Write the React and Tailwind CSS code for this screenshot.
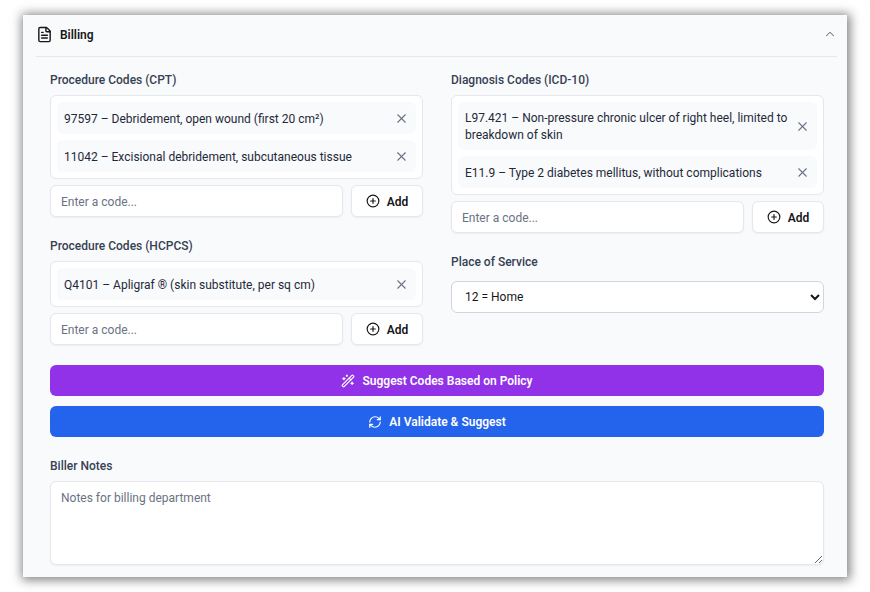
import { useId } from "react";
import { ChevronUp, CirclePlus, FileText, RefreshCw, WandSparkles, X } from "lucide-react";

const labelClass = "block pt-px text-[12px] leading-[17px] font-medium text-gray-700";

function CodeField({ label, codes }) {
  const id = useId();
  return (
    <section>
      <label htmlFor={id} className={labelClass}>{label}</label>
      <ul className="mt-1.5 flex flex-col gap-1.5 rounded-md border border-gray-200 bg-white p-1.5">
        {codes.map((code) => (
          <li key={code} className="flex min-h-8 items-center justify-between gap-1 rounded-md bg-[#f9fafc] px-[7px] pt-2 pb-1.5 text-[12px] leading-[17px] text-gray-800">
            <span>{code}</span>
            <button type="button" aria-label={`Remove ${code}`} className="shrink-0 pb-0.5 text-gray-500">
              <X size={15} strokeWidth={1.75} />
            </button>
          </li>
        ))}
      </ul>
      <div className="mt-1.5 flex gap-2">
        <input id={id} type="text" placeholder="Enter a code..." className="h-8 min-w-0 flex-1 rounded-md border border-gray-200 bg-white px-2.5 pt-0.5 text-[12px] shadow-xs placeholder:text-gray-500" />
        <button type="button" className="flex h-8 w-[72px] shrink-0 items-center justify-center gap-[7px] rounded-md border border-gray-200 bg-white text-[12px] font-semibold text-neutral-900 shadow-xs">
          <CirclePlus size={14} strokeWidth={2} />
          <span className="pt-0.5">Add</span>
        </button>
      </div>
    </section>
  );
}

export default function App() {
  return (
    <div className="bg-white px-[23px] py-[15px] font-[Roboto,sans-serif]">
      <main className="bg-[#f9fafc] pb-3 shadow-[1px_1px_10px_2px_rgba(0,0,0,0.5)]">
        <header className="mr-2.5 ml-[13px] flex h-[42px] items-center gap-[7px] border-b border-gray-200 pb-[3px]">
          <FileText size={17} strokeWidth={2} className="text-neutral-900" />
          <h1 className="flex-1 pt-0.5 text-[12px] font-semibold text-neutral-900">Billing</h1>
          <button type="button" aria-label="Collapse billing" className="text-gray-500">
            <ChevronUp size={14} strokeWidth={1.75} />
          </button>
        </header>
        <form className="flex flex-col gap-5 pt-3.5 pr-[23px] pl-[27px]">
          <div className="grid grid-cols-2 gap-7">
            <div className="flex flex-col gap-5">
              <CodeField
                label="Procedure Codes (CPT)"
                codes={["97597 – Debridement, open wound (first 20 cm²)", "11042 – Excisional debridement, subcutaneous tissue"]}
              />
              <CodeField label="Procedure Codes (HCPCS)" codes={["Q4101 – Apligraf ® (skin substitute, per sq cm)"]} />
            </div>
            <div className="flex flex-col gap-5">
              <CodeField
                label="Diagnosis Codes (ICD-10)"
                codes={["L97.421 – Non-pressure chronic ulcer of right heel, limited to breakdown of skin", "E11.9 – Type 2 diabetes mellitus, without complications"]}
              />
              <div>
                <label htmlFor="place" className={labelClass}>Place of Service</label>
                <select id="place" defaultValue="12" className="mt-2.5 h-8 w-full rounded-md border border-gray-300 bg-white px-[9px] text-[12px] text-neutral-900">
                  <option value="11">11 = Office</option>
                  <option value="12">12 = Home</option>
                </select>
              </div>
            </div>
          </div>
          <div className="flex flex-col gap-2.5">
            <button type="button" className="flex h-[31px] items-center justify-center gap-[7px] rounded-md bg-[#9131e8] text-[12px] font-semibold text-white">
              <WandSparkles size={14} strokeWidth={2} />
              Suggest Codes Based on Policy
            </button>
            <button type="button" className="flex h-[31px] items-center justify-center gap-[7px] rounded-md bg-[#2463eb] text-[12px] font-semibold text-white">
              <RefreshCw size={14} strokeWidth={2} />
              AI Validate &amp; Suggest
            </button>
          </div>
          <div>
            <label htmlFor="notes" className={labelClass}>Biller Notes</label>
            <textarea id="notes" placeholder="Notes for billing department" className="mt-1.5 block h-[84px] w-full rounded-md border border-gray-200 bg-white px-2.5 py-[7px] text-[12px] leading-[18px] shadow-xs placeholder:text-gray-500" />
          </div>
        </form>
      </main>
    </div>
  );
}
